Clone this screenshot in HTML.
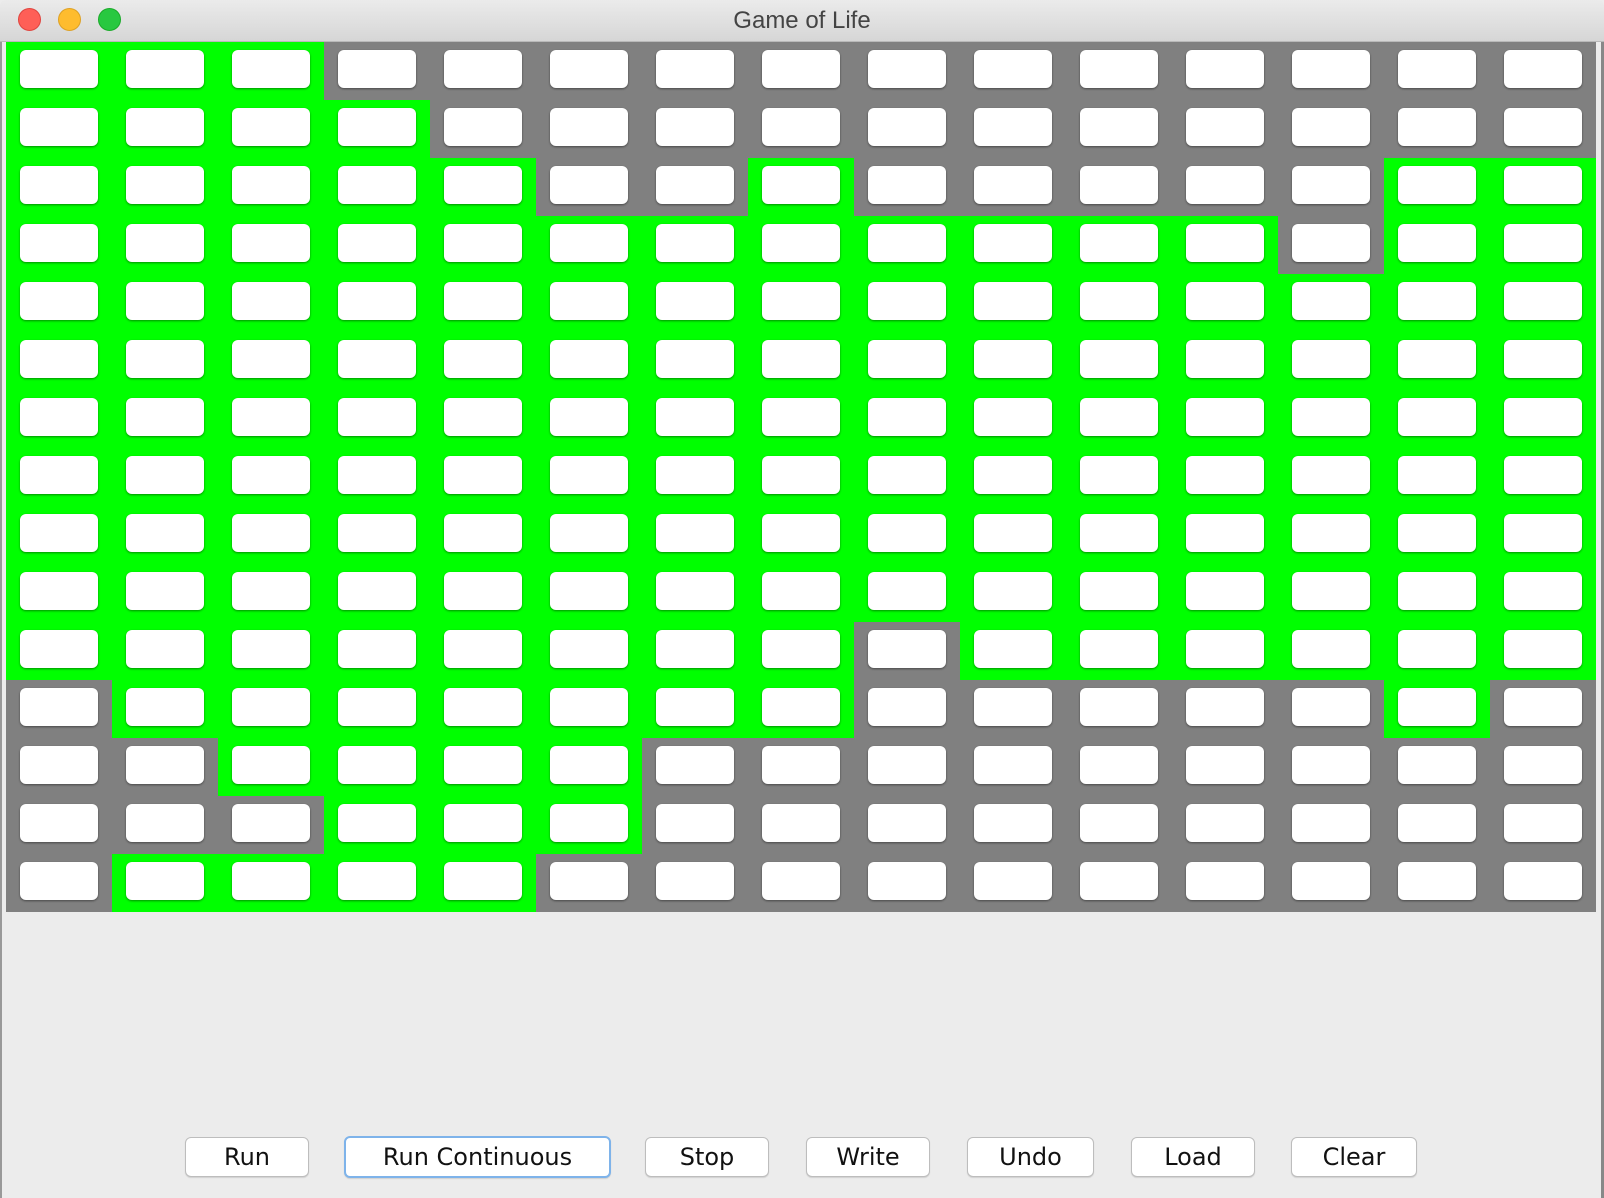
<!DOCTYPE html>
<html><head><style>
body{margin:0;width:1604px;height:1198px;background:#ececec;overflow:hidden;position:relative;font-family:"Liberation Sans",sans-serif}
#tb{position:absolute;left:0;top:0;width:1604px;height:41px;background:linear-gradient(#ebebeb,#d6d6d6);border-bottom:1px solid #b9b9b9;border-radius:6px 6px 0 0}
.dot{position:absolute;top:8px;width:23px;height:23px;border-radius:50%}
#title{position:absolute;top:0;left:0;width:1604px;text-align:center;line-height:41px;font-size:24px;color:#444}
#lb{position:absolute;left:0;top:42px;width:2px;height:1156px;background:#999}
#rb{position:absolute;left:1601px;top:42px;width:3px;height:1156px;background:#888}
#grid{position:absolute;left:6px;top:42px;width:1590px;height:870px}
.c{position:absolute;width:106px;height:58px}
.c i{position:absolute;left:14px;top:8px;width:78px;height:38px;background:#fff;border-radius:6px;box-shadow:0 1px 2px rgba(0,0,0,.45)}
.b{position:absolute;top:1137px;height:38px;background:#fff;border:1px solid #bdbdbd;border-radius:6px;font-family:"DejaVu Sans",sans-serif;font-size:24px;text-align:center;line-height:38px;color:#111;box-shadow:0 1px 1px rgba(0,0,0,.12)}
</style></head><body>
<div id="tb"><div class="dot" style="left:18px;background:#fe5f57;border:1px solid #e0443e;box-sizing:border-box"></div><div class="dot" style="left:58px;background:#febc2e;border:1px solid #dea123;box-sizing:border-box"></div><div class="dot" style="left:98px;background:#28c840;border:1px solid #1aab29;box-sizing:border-box"></div><div id="title">Game of Life</div></div>
<div id="lb"></div><div id="rb"></div>
<div id="grid"></div>
<div class="b" style="left:185px;width:122px">Run</div>
<div class="b" style="left:344px;width:263px;border:2px solid #7eb3ea;top:1136px">Run Continuous</div>
<div class="b" style="left:645px;width:122px">Stop</div>
<div class="b" style="left:806px;width:122px">Write</div>
<div class="b" style="left:967px;width:125px">Undo</div>
<div class="b" style="left:1131px;width:122px">Load</div>
<div class="b" style="left:1291px;width:124px">Clear</div>
<script>
var p=["111000000000000","111100000000000","111110010000011","111111111111011","111111111111111","111111111111111","111111111111111","111111111111111","111111111111111","111111111111111","111111110111111","011111110000010","001111000000000","000111000000000","011110000000000"];
var h="";for(var r=0;r<15;r++)for(var c=0;c<15;c++)h+='<div class="c" style="left:'+c*106+'px;top:'+r*58+'px;background:'+(p[r][c]=="1"?"#00ff00":"#808080")+'"><i></i></div>';
document.getElementById("grid").innerHTML=h;
</script>
</body></html>
